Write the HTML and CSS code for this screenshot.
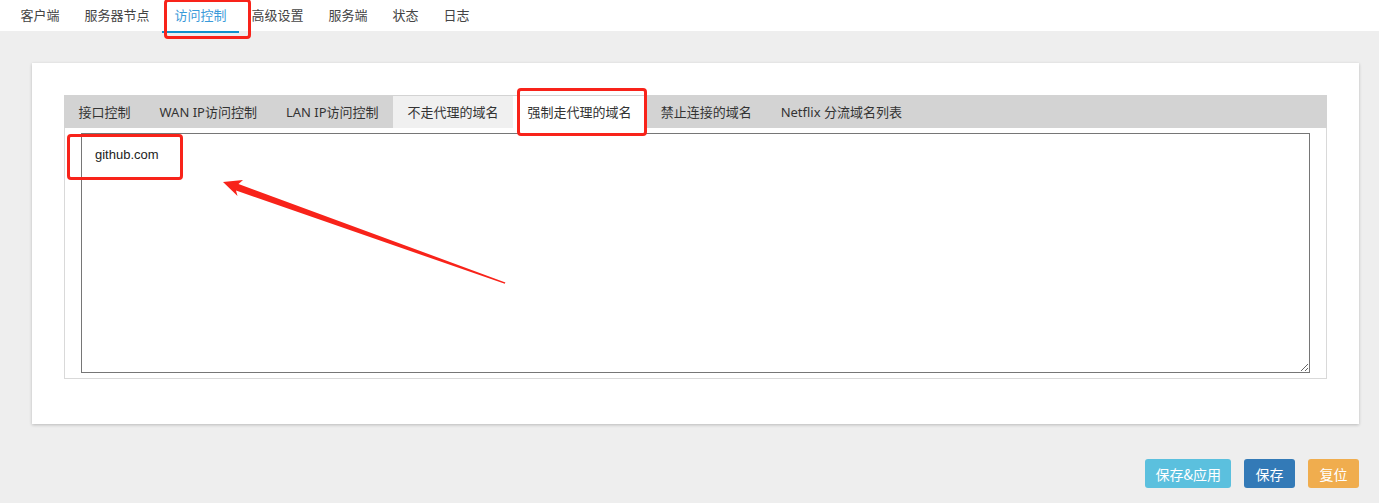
FILE: index.html
```html
<!DOCTYPE html>
<html lang="zh-CN">
<head>
    <meta charset="UTF-8">
    <meta name="viewport" content="width=device-width, initial-scale=1.0">
    <title>访问控制</title>
    <link rel="stylesheet" href="styles.css">
</head>
<body>
    <div class="topnav">
        <ul class="nav-tabs">
            <li>客户端</li>
            <li>服务器节点</li>
            <li class="active">访问控制</li>
            <li>高级设置</li>
            <li>服务端</li>
            <li>状态</li>
            <li>日志</li>
        </ul>
    </div>

    <div class="main">
        <div class="card">
            <ul class="sub-tabs">
                <li>接口控制</li>
                <li>WAN IP访问控制</li>
                <li>LAN IP访问控制</li>
                <li class="hover">不走代理的域名</li>
                <li class="active">强制走代理的域名</li>
                <li>禁止连接的域名</li>
                <li>Netflix 分流域名列表</li>
            </ul>
            <div class="tab-panel">
                <textarea class="domain-list" spellcheck="false">github.com</textarea>
            </div>
        </div>

        <div class="actions">
            <button class="btn btn-apply">保存&amp;应用</button>
            <button class="btn btn-save">保存</button>
            <button class="btn btn-reset">复位</button>
        </div>
    </div>

    <!-- annotations drawn over the screenshot -->
    <div class="mark mark-nav"></div>
    <div class="mark mark-tab"></div>
    <div class="mark mark-text"></div>
    <svg class="arrow" width="1379" height="503" viewBox="0 0 1379 503">
        <polygon points="223,182 243,180 238.5,184 505.4,282.4 504.8,283.8 236,190.6 237.5,196" fill="#f8231a"/>
    </svg>
</body>
</html>
```

FILE: styles.css
```css
body {
    margin: 0;
    background: #eeeeee;
    font-family: "Noto Sans", "Noto Sans CJK SC", sans-serif;
    font-size: 13px;
    color: #333;
}
ul {
    list-style: none;
    margin: 0;
    padding: 0;
}
.topnav {
    background: #fff;
    height: 31px;
    padding-left: 8px;
}
.nav-tabs {
    display: flex;
}
.nav-tabs li {
    position: relative;
    padding: 0 12.5px;
    line-height: 31px;
    color: #444;
}
.nav-tabs li.active {
    color: #3a9ad9;
}
.nav-tabs li.active::after {
    content: "";
    position: absolute;
    left: 0;
    right: 0;
    bottom: -2px;
    height: 2px;
    background: #1090cc;
}
.main {
    padding: 32px 20px 0 32px;
}
.card {
    background: #fff;
    padding: 32px 32px 45px;
    box-shadow: 0 1px 3px rgba(0,0,0,0.22);
}
.sub-tabs {
    display: flex;
    background: #d3d3d3;
    height: 33px;
}
.sub-tabs li {
    margin-top: 1px;
    padding: 0 14.5px;
    line-height: 32px;
    color: #333;
}
.sub-tabs li.hover {
    background: #f0f0f0;
}
.sub-tabs li.active {
    background: #fff;
}
.tab-panel {
    border: 1px solid #d9d9d9;
    border-top: none;
    padding: 5px 16px;
}
.domain-list {
    display: block;
    box-sizing: border-box;
    width: 100%;
    height: 240px;
    margin: 0;
    padding: 13px 13px;
    border: 1px solid #767676;
    font-family: "Liberation Sans", Arial, sans-serif;
    font-size: 13px;
    line-height: 16px;
    color: #222;
    resize: vertical;
    outline: none;
}
.actions {
    display: flex;
    justify-content: flex-end;
    gap: 13px;
    margin-top: 35px;
}
.btn {
    height: 29px;
    padding: 0 11.5px;
    border: none;
    border-radius: 3px;
    color: #fff;
    font-family: "Noto Sans CJK SC", sans-serif;
    font-size: 14px;
    cursor: pointer;
}
.btn-apply {
    padding: 0 10px;
    background: #5bc0de;
}
.btn-save { background: #337ab7; }
.btn-reset { background: #f0ad4e; }

.mark {
    position: absolute;
    border: 3px solid #f8231a;
    border-radius: 4px;
    box-sizing: border-box;
}
.mark-nav {
    left: 164px;
    top: -1px;
    width: 87px;
    height: 40px;
}
.mark-tab {
    left: 517px;
    top: 88px;
    width: 130px;
    height: 48px;
}
.mark-text {
    left: 67px;
    top: 134px;
    width: 116px;
    height: 46px;
}
.arrow {
    position: absolute;
    left: 0;
    top: 0;
    pointer-events: none;
}
```
